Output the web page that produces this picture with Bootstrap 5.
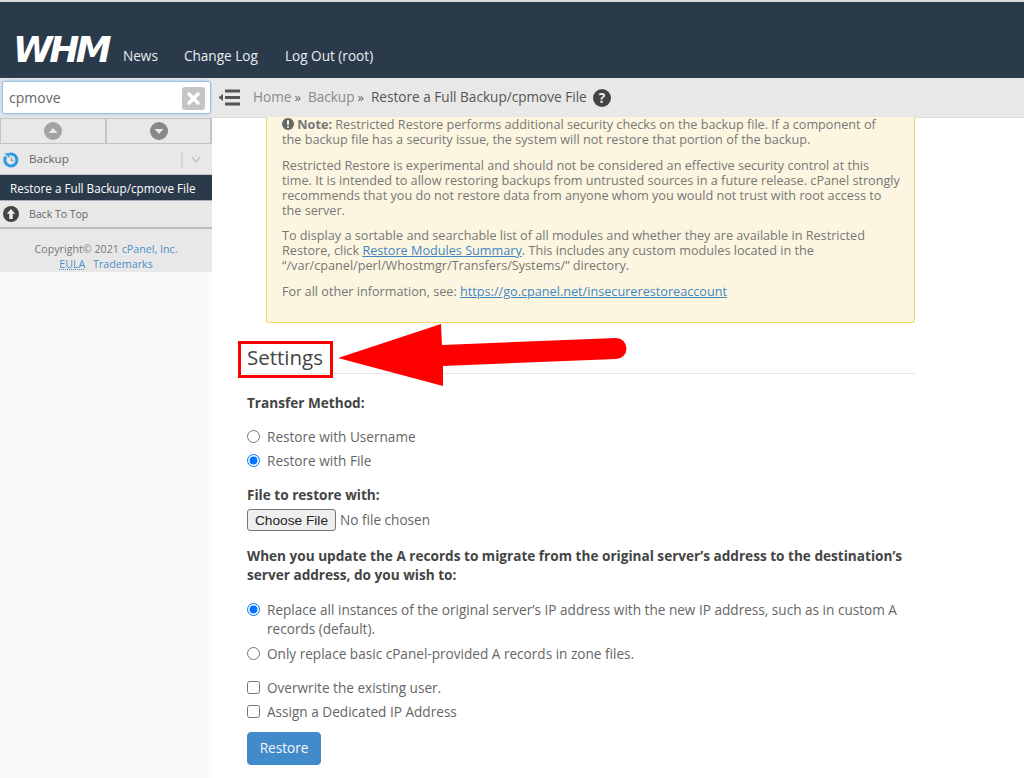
<!doctype html>
<html lang="en">
<head>
<meta charset="utf-8">
<title>WHM</title>
<link href="https://cdn.jsdelivr.net/npm/bootstrap@5.3.0/dist/css/bootstrap.min.css" rel="stylesheet">
<style>
html,body{height:778px;overflow:hidden}
body{font-family:"Open Sans",sans-serif;font-size:13.6px;line-height:1.2;color:#555;background:#fff;position:relative;border-top:2px solid #d8dadc}
.topbar{height:76px;background:#2b3a4a;padding-left:13px}
.logo-text{font-family:"DejaVu Sans",sans-serif;font-weight:700;font-style:italic;font-size:36px;line-height:1;color:#fff;letter-spacing:-3.5px;width:110px;margin-bottom:10px}
.toplink{color:#e8edf1;font-size:13.6px;text-decoration:none;margin-bottom:13px;line-height:19px}
.shell{height:700px}
.side{width:212px;background:#fafafa;flex:none}
.searchwrap{height:40px;background:#e8e8e8;padding:3px 1px 0 2px}
.searchbox{height:33px;background:#fff;border:1px solid #9ec3e6;border-radius:3px;box-shadow:0 0 4px #9ec3e6;padding-left:6px;font-size:14px;color:#666;padding-top:1px}
.clearbtn{width:23px;height:23px;background:#c4c4c4;border-radius:3px;margin-right:5px}
.arrows{height:26px;background:#e8e8e8;border-top:1px solid #c4c4c4;border-bottom:1px solid #c4c4c4;border-left:1px solid #c4c4c4}
.arrows>div{border-right:2px solid #c4c4c4}
.catrow{height:30px;background:#e8e8e8;font-size:11.6px;color:#666}
.caticon{margin:2px 10px 0 3px}
.catchev{border-left:2px solid #d4d4d4;height:16px;width:20px;margin-right:11px;color:#bbb}
.activeitem{height:27px;background:#2b3a4a;color:#fff;font-size:11.7px;padding:2px 0 0 10px;border-top:1px solid #c4c4c4;border-bottom:1px solid #aab}
.backtop{height:28px;background:#e8e8e8;font-size:10.5px;color:#666;border-bottom:2px solid #bdbdbd}
.copy{background:#e8e8e8;height:43px;font-size:10.7px;line-height:15px;color:#777;padding-top:13px}
.copy a{color:#4f8fc6;text-decoration:none}
.copy a.abbr{text-decoration:underline dotted;margin-right:5px}
.crumb{height:40px;background:#e8e8e8;border-bottom:1px solid #ddd;font-size:13.6px;color:#8a8a8a;padding-left:6px}
.crumb .cur{color:#555}
.crumb .sep{color:#666;font-size:13px;margin:0 7px 0 3px}
.body-scroll{padding:0 0 0 35px;width:703px}
.warnbox{margin-left:19px;width:649px;height:206px;background:#fcf6e0;border:1px solid #f0d96e;border-top:0;border-radius:0 0 3px 3px;padding:0 10px 0 15px;font-size:12.67px;line-height:15px;color:#777}
.warnbox p{margin:0 0 10.5px}
.warnbox p:first-child{margin-top:-1px}
.warnbox a{color:#3f87c4}
.setting-head{font-size:20.5px;line-height:28px;color:#444;font-weight:400;margin:0;height:51px;padding-top:20px;border-bottom:1px solid #e5e5e5}
.fld-label{font-weight:700;font-size:13.6px;line-height:19px;color:#444;margin:0}
.optline{font-size:13.6px;line-height:19px;color:#666;display:flex;margin:0}
.optline input{flex:none;margin:3px 7px 0 0;width:13px;height:13px}
.pickbtn{font-family:"Liberation Sans",sans-serif;font-size:13.7px;height:22px;width:89px;border:1px solid #767676;border-radius:3px;background:#efefef;color:#222;padding:0;line-height:19px}
.nofile{font-size:13.6px;color:#666;margin-left:4px}
.goBtn{background:#428bca;border:1px solid #428bca;color:#f2f6fa;font-size:13.6px;width:74px;height:33px;padding:0;border-radius:4px;margin-top:11px}
.callout{position:absolute;left:238px;top:339px;width:95px;height:37px;border:3px solid #f00;pointer-events:none}
.arrowlay{position:absolute;left:335px;top:318px;pointer-events:none}
</style>
</head>
<body>
<header class="topbar d-flex align-items-end">
  <div class="logo-text">WHM</div>
  <a class="toplink" href="#">News</a>
  <a class="toplink" href="#" style="margin-left:26px">Change Log</a>
  <a class="toplink" href="#" style="margin-left:27px">Log Out (root)</a>
</header>
<div class="shell d-flex">
  <aside class="side">
    <div class="searchwrap">
      <div class="searchbox d-flex align-items-center justify-content-between">
        <span>cpmove</span>
        <span class="clearbtn d-flex align-items-center justify-content-center">
          <svg width="13" height="13" viewBox="0 0 13 13"><path d="M2 2l9 9M11 2l-9 9" stroke="#fff" stroke-width="3.4" stroke-linecap="round"/></svg>
        </span>
      </div>
    </div>
    <div class="arrows d-flex">
      <div class="d-flex align-items-center justify-content-center" style="width:106px">
        <svg width="18" height="18" viewBox="0 0 18 18"><circle cx="9" cy="9" r="9" fill="#a3a3a3"/><path d="M4.500 11L9 6l4.500 5z" fill="#e8e8e8"/></svg>
      </div>
      <div class="d-flex align-items-center justify-content-center" style="width:105px">
        <svg width="18" height="18" viewBox="0 0 18 18"><circle cx="9" cy="9" r="9" fill="#888"/><path d="M4.500 7L9 12l4.500-5z" fill="#e8e8e8"/></svg>
      </div>
    </div>
    <div class="catrow d-flex align-items-center">
      <svg class="caticon" width="16" height="16" viewBox="0 0 16 16"><path d="M6.500 2.200A6 6 0 1 1 3 4.500" fill="none" stroke="#2f9bdc" stroke-width="3"/><path d="M1.500 1.500L6.500 1v5z" fill="#2f9bdc"/><path d="M8.500 5.500v3H11" fill="none" stroke="#8fa3b0" stroke-width="1.500"/></svg>
      <span class="me-auto">Backup</span>
      <span class="catchev d-flex align-items-center justify-content-end">
        <svg width="10" height="7" viewBox="0 0 10 7"><path d="M1 1l4 5 4-5" fill="none" stroke="#c4c4c4" stroke-width="1.300"/></svg>
      </span>
    </div>
    <div class="activeitem d-flex align-items-center">Restore a Full Backup/cpmove File</div>
    <div class="backtop d-flex align-items-center">
      <svg style="margin:0 10px 0 3px" width="16" height="16" viewBox="0 0 16 16"><circle cx="8" cy="8" r="8" fill="#444"/><path d="M8 3l4.200 4.800H9.700V13H6.300V7.800H3.800z" fill="#eee"/></svg>
      <span>Back To Top</span>
    </div>
    <div class="copy text-center">
      Copyright© 2021 <a href="#">cPanel, Inc.</a><br>
      <a class="abbr" href="#">EULA</a> <a href="#">Trademarks</a>
    </div>
  </aside>
  <main class="flex-grow-1">
    <div class="crumb d-flex align-items-center">
      <svg width="23" height="17" viewBox="0 0 23 17" style="margin-right:12px"><path d="M7 2h15M7 8.500h15M7 15h15" stroke="#555" stroke-width="3"/><path d="M0.500 8.500L5 5v7z" fill="#555"/></svg>
      <span>Home</span><span class="sep">»</span><span>Backup</span><span class="sep">»</span><span class="cur">Restore a Full Backup/cpmove File</span>
      <svg class="help-ico" width="18" height="18" viewBox="0 0 18 18" style="margin-left:6px"><circle cx="9" cy="9" r="9" fill="#444"/><text x="9" y="14" text-anchor="middle" font-family="Open Sans" font-weight="700" font-size="13.500" fill="#eee">?</text></svg>
    </div>
    <div class="body-scroll">
      <div class="warnbox">
        <p><svg width="12" height="12" viewBox="0 0 12 12" style="vertical-align:-1px"><circle cx="6" cy="6" r="6" fill="#666"/><path d="M6 2.200v4.600M6 8.200v1.600" stroke="#fcf6e0" stroke-width="2"/></svg> <strong>Note:</strong> Restricted Restore performs additional security checks on the backup file. If a component of<br>the backup file has a security issue, the system will not restore that portion of the backup.</p>
        <p>Restricted Restore is experimental and should not be considered an effective security control at this<br>time. It is intended to allow restoring backups from untrusted sources in a future release. cPanel strongly<br>recommends that you do not restore data from anyone whom you would not trust with root access to<br>the server.</p>
        <p>To display a sortable and searchable list of all modules and whether they are available in Restricted<br>Restore, click <a href="#">Restore Modules Summary</a>. This includes any custom modules located in the<br>“/var/cpanel/perl/Whostmgr/Transfers/Systems/” directory.</p>
        <p>For all other information, see: <a href="#">https://go.cpanel.net/insecurerestoreaccount</a></p>
      </div>
      <h2 class="setting-head">Settings</h2>
      <p class="fld-label" style="margin-top:19px">Transfer Method:</p>
      <label class="optline" style="margin-top:15px"><input type="radio" name="m">Restore with Username</label>
      <label class="optline" style="margin-top:5px"><input type="radio" name="m" checked>Restore with File</label>
      <p class="fld-label" style="margin-top:15px">File to restore with:</p>
      <div class="d-flex align-items-center" style="margin-top:5px"><button class="pickbtn" type="button">Choose File</button><span class="nofile">No file chosen</span></div>
      <p class="fld-label" style="margin-top:15px">When you update the A records to migrate from the original server’s address to the destination’s server address, do you wish to:</p>
      <label class="optline" style="margin-top:16px"><input type="radio" name="a" checked><span>Replace all instances of the original server’s IP address with the new IP address, such as in custom A records (default).</span></label>
      <label class="optline" style="margin-top:6px"><input type="radio" name="a">Only replace basic cPanel-provided A records in zone files.</label>
      <label class="optline" style="margin-top:15px"><input type="checkbox">Overwrite the existing user.</label>
      <label class="optline" style="margin-top:5px"><input type="checkbox">Assign a Dedicated IP Address</label>
      <button class="goBtn" type="button">Restore</button>
    </div>
  </main>
</div>
<div class="callout"></div>
<svg class="arrowlay" width="295" height="70" viewBox="0 0 295 70"><path d="M3 38L106 4l1 21 174-7a10.500 10.500 0 0 1 0 21l-173 7v20z" fill="#f00"/></svg>
<script src="https://cdn.jsdelivr.net/npm/bootstrap@5.3.0/dist/js/bootstrap.bundle.min.js"></script>
</body>
</html>
